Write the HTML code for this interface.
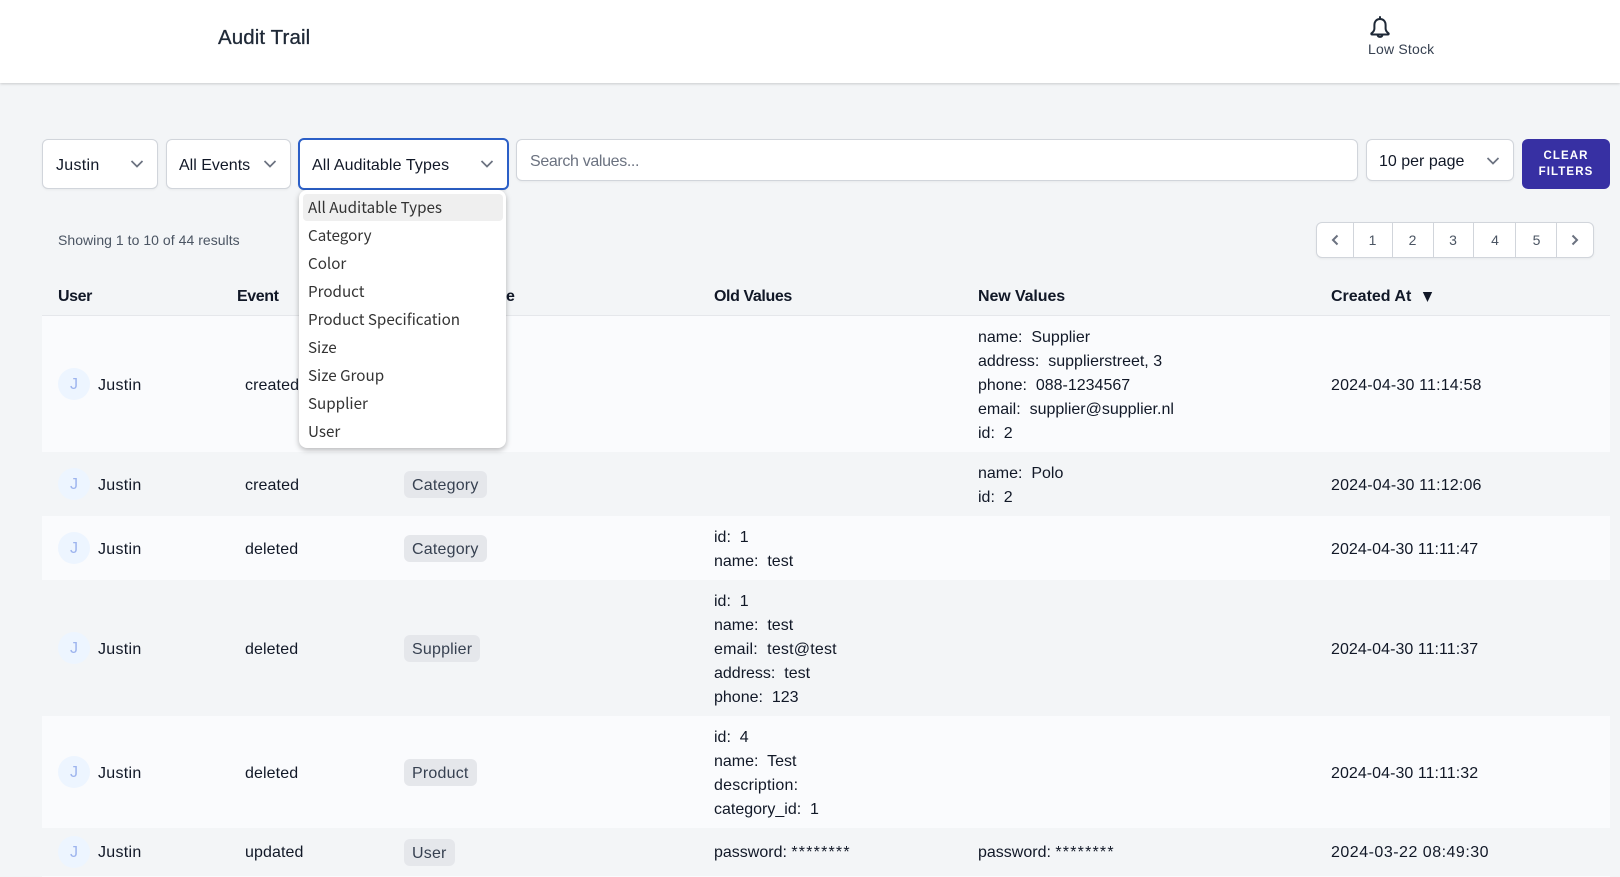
<!DOCTYPE html>
<html lang="en">
<head>
<meta charset="utf-8">
<title>Audit Trail</title>
<style>
*{box-sizing:border-box;margin:0;padding:0}
html,body{width:1620px;height:877px;overflow:hidden;background:#f3f5f7}
body{position:relative;font-family:"Liberation Sans",sans-serif;color:#111827;font-size:16px}
.a{position:absolute;white-space:nowrap}
.t{position:absolute;white-space:pre;line-height:24px;height:24px;color:#111827}
.hdr{left:0;top:0;width:1620px;height:83px;background:#fff;box-shadow:0 1px 3px rgba(0,0,0,.12),0 1px 2px rgba(0,0,0,.06)}
.box{position:absolute;background:#fff;border:1px solid #d1d5db;border-radius:6px;box-shadow:0 1px 2px rgba(0,0,0,.05)}
.row{position:absolute;left:42px;width:1568px}
.odd{background:#fafbfd}
.av{position:absolute;left:58px;width:32px;height:32px;border-radius:50%;background:#edf5ff;color:#9db4ee;text-align:center;line-height:34px;font-size:16px}
.badge{position:absolute;left:404px;height:27px;line-height:29px;padding:0 8px;background:#e5e7eb;border-radius:6px;color:#374151;font-size:16px;letter-spacing:.2px}
.th{font-weight:bold;top:285px}
.n{letter-spacing:.3px}
.d{letter-spacing:.17px}
.s{letter-spacing:1.200px}
svg{position:absolute;display:block}
.dd{position:absolute;left:299px;top:190px;width:207px;height:258px;background:#fff;border-radius:8px;box-shadow:0 2px 6px rgba(0,0,0,.28)}
.hl{position:absolute;left:303px;top:194px;width:200px;height:27px;background:#efefef;border-radius:4px}
.o{position:absolute;left:308px;font-family:"Noto Sans CJK SC","DejaVu Sans",sans-serif;font-size:15.2px;line-height:28px;height:28px;color:#333;white-space:pre}
.pg{position:absolute;top:223px;height:35px;line-height:35px;text-align:center;font-size:14px;color:#4b5563}
.sep{position:absolute;top:222px;height:36px;width:1px;background:#d1d5db}
</style>
</head>
<body>

<div class="a hdr"></div>
<div class="a" style="left:218px;top:26px;font-size:20.5px;line-height:24px;color:#1f2937;-webkit-text-stroke:.3px #1f2937;letter-spacing:.1px">Audit Trail</div>
<svg style="left:1368px;top:13px" width="24" height="28" viewBox="0 0 24 28" fill="none" stroke="#1f2937" stroke-width="2" stroke-linejoin="round" stroke-linecap="round">
<path d="M12 4v2M12 6c-3.600 0-5.600 2.600-5.600 6v3.500c0 2-1 3.400-2.800 4.700-.6.500-.3 1.300.4 1.300h16c.7 0 1-.8.4-1.300-1.800-1.300-2.800-2.700-2.800-4.700V12c0-3.400-2-6-5.600-6z"/>
<path d="M9.500 22a2.600 2.600 0 0 0 5 0"/>
</svg>
<div class="a" style="left:1368px;top:40px;font-size:14px;line-height:18px;color:#374151;letter-spacing:.2px">Low Stock</div>

<!-- filters -->
<div class="box" style="left:42px;top:139px;width:116px;height:50px"></div>
<div class="t n" style="left:56px;top:154px">Justin</div>
<svg style="left:130px;top:159px" width="14" height="10" viewBox="0 0 14 10" fill="none" stroke="#6b7280" stroke-width="1.700"><path d="M1.500 2l5.500 5.500L12.500 2"/></svg>

<div class="box" style="left:166px;top:139px;width:125px;height:50px"></div>
<div class="t" style="left:179px;top:154px">All Events</div>
<svg style="left:263px;top:159px" width="14" height="10" viewBox="0 0 14 10" fill="none" stroke="#6b7280" stroke-width="1.700"><path d="M1.500 2l5.500 5.500L12.500 2"/></svg>

<div class="box" style="left:298px;top:138px;width:211px;height:52px;border:2px solid #2b5fc7"></div>
<div class="t" style="left:312px;top:154px;letter-spacing:.12px">All Auditable Types</div>
<svg style="left:480px;top:159px" width="14" height="10" viewBox="0 0 14 10" fill="none" stroke="#6b7280" stroke-width="1.700"><path d="M1.500 2l5.500 5.500L12.500 2"/></svg>

<div class="box" style="left:516px;top:139px;width:842px;height:42px"></div>
<div class="t" style="left:530px;top:150px;color:#6b7280;letter-spacing:-.35px">Search values...</div>

<div class="box" style="left:1366px;top:139px;width:148px;height:42px"></div>
<div class="t" style="left:1379px;top:150px">10 per page</div>
<svg style="left:1486px;top:156px" width="14" height="10" viewBox="0 0 14 10" fill="none" stroke="#6b7280" stroke-width="1.700"><path d="M1.500 2l5.500 5.500L12.500 2"/></svg>

<div class="a" style="left:1522px;top:139px;width:88px;height:50px;background:#3730a3;border-radius:6px;color:#fff;font-size:11.500px;font-weight:bold;letter-spacing:1.100px;line-height:16px;text-align:center;padding-top:9px;white-space:normal">CLEAR<br>FILTERS</div>

<!-- summary + pagination -->
<div class="a" style="left:58px;top:230px;font-size:14px;line-height:20px;color:#4b5563;letter-spacing:.04px">Showing 1 to 10 of 44 results</div>

<div class="box" style="left:1316px;top:222px;width:278px;height:36px"></div>
<div class="sep" style="left:1353px"></div>
<div class="sep" style="left:1392px"></div>
<div class="sep" style="left:1433px"></div>
<div class="sep" style="left:1473px"></div>
<div class="sep" style="left:1515px"></div>
<div class="sep" style="left:1556px"></div>
<svg style="left:1329px;top:233px" width="12" height="14" viewBox="0 0 12 14" fill="none" stroke="#6b7280" stroke-width="2"><path d="M8.500 2.500L4 7l4.500 4.500"/></svg>
<div class="pg" style="left:1353px;width:39px">1</div>
<div class="pg" style="left:1392px;width:41px">2</div>
<div class="pg" style="left:1433px;width:40px">3</div>
<div class="pg" style="left:1474px;width:42px">4</div>
<div class="pg" style="left:1516px;width:41px">5</div>
<svg style="left:1569px;top:233px" width="12" height="14" viewBox="0 0 12 14" fill="none" stroke="#6b7280" stroke-width="2"><path d="M3.500 2.500L8 7l-4.500 4.500"/></svg>

<!-- table head -->
<div class="t th" style="left:58px;letter-spacing:-.4px">User</div>
<div class="t th" style="left:237px;letter-spacing:-.4px">Event</div>
<div class="t th" style="left:714px;letter-spacing:-.4px">Old Values</div>
<div class="t th" style="left:978px;letter-spacing:-.1px">New Values</div>
<div class="t th" style="left:1331px">Created At</div>
<svg style="left:1422px;top:292px" width="11" height="10" viewBox="0 0 11 10"><path d="M.8 0h9.400L5.500 10z" fill="#111827"/></svg>
<div class="a" style="left:42px;top:315px;width:1568px;height:1px;background:#e5e7eb"></div>

<!-- rows -->
<div class="row odd" style="top:316px;height:136px"></div>
<div class="row" style="top:452px;height:64px"></div>
<div class="row odd" style="top:516px;height:64px"></div>
<div class="row" style="top:580px;height:136px"></div>
<div class="row odd" style="top:716px;height:112px"></div>
<div class="row" style="top:828px;height:48px"></div>
<div class="row odd" style="top:876px;height:1px"></div>

<!-- row 1 -->
<div class="av" style="top:368px">J</div>
<div class="t n" style="left:98px;top:374px">Justin</div>
<div class="t" style="left:245px;top:374px;letter-spacing:.1px">created</div>
<div class="t" style="left:978px;top:326px">name:  Supplier</div>
<div class="t" style="left:978px;top:350px">address:  supplierstreet, 3</div>
<div class="t" style="left:978px;top:374px">phone:  088-1234567</div>
<div class="t" style="left:978px;top:398px">email:  supplier@supplier.nl</div>
<div class="t" style="left:978px;top:422px">id:  2</div>
<div class="t d" style="left:1331px;top:374px">2024-04-30 11:14:58</div>

<!-- row 2 -->
<div class="av" style="top:468px">J</div>
<div class="t n" style="left:98px;top:474px">Justin</div>
<div class="t" style="left:245px;top:474px;letter-spacing:.1px">created</div>
<div class="badge" style="top:471px">Category</div>
<div class="t" style="left:978px;top:462px">name:  Polo</div>
<div class="t" style="left:978px;top:486px">id:  2</div>
<div class="t d" style="left:1331px;top:474px">2024-04-30 11:12:06</div>

<!-- row 3 -->
<div class="av" style="top:532px">J</div>
<div class="t n" style="left:98px;top:538px">Justin</div>
<div class="t" style="left:245px;top:538px;letter-spacing:.1px">deleted</div>
<div class="badge" style="top:535px">Category</div>
<div class="t" style="left:714px;top:526px">id:  1</div>
<div class="t" style="left:714px;top:550px">name:  test</div>
<div class="t" style="left:1331px;top:538px;letter-spacing:.05px">2024-04-30 11:11:47</div>

<!-- row 4 -->
<div class="av" style="top:632px">J</div>
<div class="t n" style="left:98px;top:638px">Justin</div>
<div class="t" style="left:245px;top:638px;letter-spacing:.1px">deleted</div>
<div class="badge" style="top:635px">Supplier</div>
<div class="t" style="left:714px;top:590px">id:  1</div>
<div class="t" style="left:714px;top:614px">name:  test</div>
<div class="t" style="left:714px;top:638px;letter-spacing:.2px">email:  test@test</div>
<div class="t" style="left:714px;top:662px">address:  test</div>
<div class="t" style="left:714px;top:686px">phone:  123</div>
<div class="t" style="left:1331px;top:638px;letter-spacing:.05px">2024-04-30 11:11:37</div>

<!-- row 5 -->
<div class="av" style="top:756px">J</div>
<div class="t n" style="left:98px;top:762px">Justin</div>
<div class="t" style="left:245px;top:762px;letter-spacing:.1px">deleted</div>
<div class="badge" style="top:759px">Product</div>
<div class="t" style="left:714px;top:726px">id:  4</div>
<div class="t" style="left:714px;top:750px">name:  Test</div>
<div class="t" style="left:714px;top:774px;letter-spacing:.2px">description:</div>
<div class="t" style="left:714px;top:798px">category_id:  1</div>
<div class="t" style="left:1331px;top:762px;letter-spacing:.05px">2024-04-30 11:11:32</div>

<!-- row 6 -->
<div class="av" style="top:836px">J</div>
<div class="t n" style="left:98px;top:841px">Justin</div>
<div class="t" style="left:245px;top:841px;letter-spacing:.1px">updated</div>
<div class="badge" style="top:839px">User</div>
<div class="t" style="left:714px;top:841px">password: <span class="s">********</span></div>
<div class="t" style="left:978px;top:841px">password: <span class="s">********</span></div>
<div class="t" style="left:1331px;top:841px;letter-spacing:.5px">2024-03-22 08:49:30</div>

<!-- dropdown -->
<div class="dd"></div>
<div class="hl"></div>
<div class="o" style="top:193px">All Auditable Types</div>
<div class="o" style="top:221px">Category</div>
<div class="o" style="top:249px">Color</div>
<div class="o" style="top:277px">Product</div>
<div class="o" style="top:305px">Product Specification</div>
<div class="o" style="top:333px">Size</div>
<div class="o" style="top:361px">Size Group</div>
<div class="o" style="top:389px">Supplier</div>
<div class="o" style="top:417px">User</div>

<!-- column header partially hidden behind dropdown -->
<div class="t th" style="left:506px;width:10px;overflow:hidden">e</div>

</body>
</html>
